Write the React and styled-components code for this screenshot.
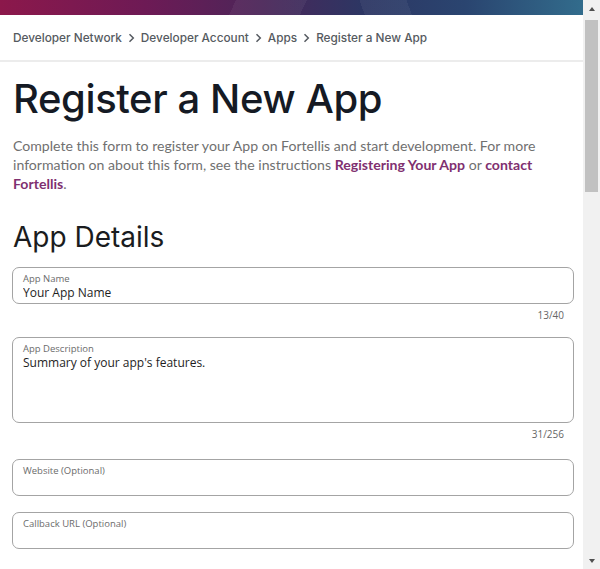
import React from 'react';
import styled, { createGlobalStyle } from 'styled-components';

const GlobalStyle = createGlobalStyle`
  html, body {
    margin: 0;
    padding: 0;
    background: #ffffff;
    overflow: hidden;
  }
  * { box-sizing: border-box; }
`;

const Window = styled.div`
  display: flex;
  height: 569px;
  width: 600px;
  overflow: hidden;
`;

const Page = styled.div`
  flex: 1;
  min-width: 0;
  overflow: hidden;
  display: flex;
  flex-direction: column;
`;

const Banner = styled.div`
  height: 15px;
  flex-shrink: 0;
  background:
    linear-gradient(115deg, transparent 0 40%, rgba(255,255,255,0.05) 40% 52%, transparent 52%),
    linear-gradient(70deg, transparent 0 62%, rgba(255,255,255,0.05) 62% 70%, transparent 70%),
    linear-gradient(90deg, #8c184b 0%, #6d1a55 25%, #4b2659 45%, #2d3663 62%, #2a4570 80%, #326c8c 100%);
`;

const Crumbs = styled.nav`
  height: 47px;
  flex-shrink: 0;
  display: flex;
  align-items: center;
  gap: 6px;
  padding: 1px 13px 0;
  border-bottom: 2px solid #ececec;
  font-family: Inter, "Liberation Sans", sans-serif;
  font-size: 11.8px;
  font-weight: 500;
  color: #555a60;
`;

const Crumb = styled.span`
  white-space: nowrap;
`;

const Chevron = () => (
  <svg width="7" height="10" viewBox="0 0 7 10" aria-hidden="true">
    <path d="M1.5 1.2 L5.3 5 L1.5 8.8" fill="none" stroke="#555a60" strokeWidth="1.5" />
  </svg>
);

const Main = styled.main`
  padding: 0 9px 40px 12px;
`;

const Title = styled.h1`
  margin: 13px 0 0 1px;
  font-family: Inter, "Liberation Sans", sans-serif;
  font-weight: 500;
  font-size: 40px;
  letter-spacing: -0.4px;
  line-height: 48px;
  color: #151a24;
`;

const Intro = styled.p`
  margin: 13px 0 0 1px;
  font-family: Lato, "Liberation Sans", sans-serif;
  font-size: 14.1px;
  line-height: 19px;
  color: #707070;
`;

const Link = styled.a`
  color: #803070;
  font-weight: 700;
  text-decoration: none;
`;

const SectionTitle = styled.h2`
  margin: 26px 0 12px 1px;
  font-family: Inter, "Liberation Sans", sans-serif;
  font-weight: 400;
  font-size: 28px;
  line-height: 36px;
  color: #1a1c20;
`;

const FieldGroup = styled.div`
  margin-bottom: ${({ $gap }) => $gap}px;
`;

const FieldBox = styled.label`
  display: flex;
  flex-direction: column;
  height: ${({ $height }) => $height}px;
  padding: 4px 10px 0;
  border: 1px solid #a4a4a4;
  border-radius: 7px;
  background: #fff;
`;

const FieldLabel = styled.span`
  font-family: "Open Sans", "Liberation Sans", sans-serif;
  font-size: 9.5px;
  line-height: 13px;
  color: #6b6b6b;
`;

const FieldInput = styled.input`
  border: none;
  outline: none;
  padding: 0;
  margin: 0;
  background: transparent;
  font-family: "Open Sans", "Liberation Sans", sans-serif;
  font-size: 12px;
  line-height: 16px;
  color: #1e1e1e;
`;

const FieldArea = styled.textarea`
  flex: 1;
  border: none;
  outline: none;
  resize: none;
  padding: 0;
  margin: 0;
  background: transparent;
  font-family: "Open Sans", "Liberation Sans", sans-serif;
  font-size: 12px;
  line-height: 16px;
  color: #1e1e1e;
`;

const Counter = styled.div`
  margin-top: 4px;
  padding-right: 10px;
  text-align: right;
  font-family: "Open Sans", "Liberation Sans", sans-serif;
  font-size: 10px;
  line-height: 14px;
  color: #666;
`;

const Scrollbar = styled.div`
  width: 17px;
  flex-shrink: 0;
  display: flex;
  flex-direction: column;
  background: #f1f1f1;
`;

const ScrollButton = styled.div`
  height: 17px;
  display: flex;
  align-items: center;
  justify-content: center;
  &::before {
    content: '';
    border-left: 3.5px solid transparent;
    border-right: 3.5px solid transparent;
    ${({ $down }) => ($down ? 'border-top: 4px solid #505050;' : 'border-bottom: 4px solid #505050;')}
  }
`;

const Track = styled.div`
  flex: 1;
  padding: 3px 2px 0;
`;

const Thumb = styled.div`
  height: 172px;
  background: #c1c1c1;
`;

const fields = [
  { label: 'App Name', value: 'Your App Name', height: 37, counter: '13/40', gap: 15 },
  { label: 'App Description', value: "Summary of your app's features.", height: 86, counter: '31/256', area: true, gap: 18 },
  { label: 'Website (Optional)', value: '', height: 37, gap: 16 },
  { label: 'Callback URL (Optional)', value: '', height: 37, gap: 16 },
];

const App = () => (
  <>
    <GlobalStyle />
    <Window>
      <Page>
        <Banner />
        <Crumbs>
          <Crumb>Developer Network</Crumb>
          <Chevron />
          <Crumb>Developer Account</Crumb>
          <Chevron />
          <Crumb>Apps</Crumb>
          <Chevron />
          <Crumb>Register a New App</Crumb>
        </Crumbs>
        <Main>
          <Title>Register a New App</Title>
          <Intro>
            Complete this form to register your App on Fortellis and start development. For more
            information on about this form, see the instructions <Link href="#">Registering Your App</Link> or{' '}
            <Link href="#">contact Fortellis</Link>.
          </Intro>
          <SectionTitle>App Details</SectionTitle>
          {fields.map((f) => (
            <FieldGroup key={f.label} $gap={f.gap}>
              <FieldBox $height={f.height}>
                <FieldLabel>{f.label}</FieldLabel>
                {f.area ? (
                  <FieldArea readOnly defaultValue={f.value} />
                ) : (
                  <FieldInput readOnly defaultValue={f.value} />
                )}
              </FieldBox>
              {f.counter && <Counter>{f.counter}</Counter>}
            </FieldGroup>
          ))}
        </Main>
      </Page>
      <Scrollbar>
        <ScrollButton />
        <Track>
          <Thumb />
        </Track>
        <ScrollButton $down />
      </Scrollbar>
    </Window>
  </>
);

export default App;
